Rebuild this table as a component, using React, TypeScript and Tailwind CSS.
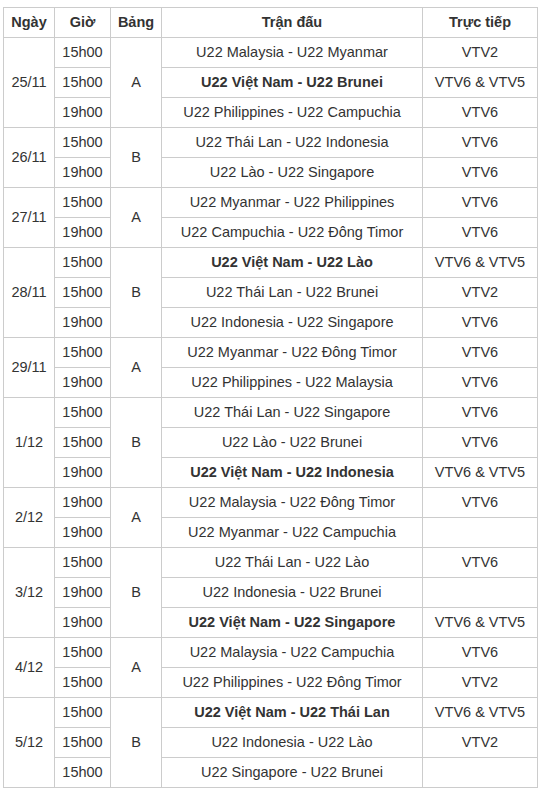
type Match = { time: string; text: string; bold?: boolean; tv: string };
type Day = { date: string; group: string; matches: Match[] };

const schedule: Day[] = [
  {
    date: "25/11",
    group: "A",
    matches: [
      { time: "15h00", text: "U22 Malaysia - U22 Myanmar", tv: "VTV2" },
      { time: "15h00", text: "U22 Việt Nam - U22 Brunei", bold: true, tv: "VTV6 & VTV5" },
      { time: "19h00", text: "U22 Philippines - U22 Campuchia", tv: "VTV6" },
    ],
  },
  {
    date: "26/11",
    group: "B",
    matches: [
      { time: "15h00", text: "U22 Thái Lan - U22 Indonesia", tv: "VTV6" },
      { time: "19h00", text: "U22 Lào - U22 Singapore", tv: "VTV6" },
    ],
  },
  {
    date: "27/11",
    group: "A",
    matches: [
      { time: "15h00", text: "U22 Myanmar - U22 Philippines", tv: "VTV6" },
      { time: "19h00", text: "U22 Campuchia - U22 Đông Timor", tv: "VTV6" },
    ],
  },
  {
    date: "28/11",
    group: "B",
    matches: [
      { time: "15h00", text: "U22 Việt Nam - U22 Lào", bold: true, tv: "VTV6 & VTV5" },
      { time: "15h00", text: "U22 Thái Lan - U22 Brunei", tv: "VTV2" },
      { time: "19h00", text: "U22 Indonesia - U22 Singapore", tv: "VTV6" },
    ],
  },
  {
    date: "29/11",
    group: "A",
    matches: [
      { time: "15h00", text: "U22 Myanmar - U22 Đông Timor", tv: "VTV6" },
      { time: "19h00", text: "U22 Philippines - U22 Malaysia", tv: "VTV6" },
    ],
  },
  {
    date: "1/12",
    group: "B",
    matches: [
      { time: "15h00", text: "U22 Thái Lan - U22 Singapore", tv: "VTV6" },
      { time: "15h00", text: "U22 Lào - U22 Brunei", tv: "VTV6" },
      { time: "19h00", text: "U22 Việt Nam - U22 Indonesia", bold: true, tv: "VTV6 & VTV5" },
    ],
  },
  {
    date: "2/12",
    group: "A",
    matches: [
      { time: "19h00", text: "U22 Malaysia - U22 Đông Timor", tv: "VTV6" },
      { time: "19h00", text: "U22 Myanmar - U22 Campuchia", tv: "" },
    ],
  },
  {
    date: "3/12",
    group: "B",
    matches: [
      { time: "15h00", text: "U22 Thái Lan - U22 Lào", tv: "VTV6" },
      { time: "19h00", text: "U22 Indonesia - U22 Brunei", tv: "" },
      { time: "19h00", text: "U22 Việt Nam - U22 Singapore", bold: true, tv: "VTV6 & VTV5" },
    ],
  },
  {
    date: "4/12",
    group: "A",
    matches: [
      { time: "15h00", text: "U22 Malaysia - U22 Campuchia", tv: "VTV6" },
      { time: "15h00", text: "U22 Philippines - U22 Đông Timor", tv: "VTV2" },
    ],
  },
  {
    date: "5/12",
    group: "B",
    matches: [
      { time: "15h00", text: "U22 Việt Nam - U22 Thái Lan", bold: true, tv: "VTV6 & VTV5" },
      { time: "15h00", text: "U22 Indonesia - U22 Lào", tv: "VTV2" },
      { time: "15h00", text: "U22 Singapore - U22 Brunei", tv: "" },
    ],
  },
];

const cell = "border border-[#cccccc] h-[30px] p-0 text-center align-middle";

export default function App() {
  return (
    <div className="min-h-screen bg-white pt-[7px] pl-[3px] font-['Liberation_Sans',Arial,sans-serif] text-[14.5px] text-[#333333]">
      <table className="w-[534px] table-fixed border-collapse">
        <colgroup>
          <col className="w-[51px]" />
          <col className="w-[56px]" />
          <col className="w-[51px]" />
          <col className="w-[261px]" />
          <col className="w-[115px]" />
        </colgroup>
        <thead>
          <tr>
            <th className={`${cell} font-bold`}>Ngày</th>
            <th className={`${cell} font-bold`}>Giờ</th>
            <th className={`${cell} font-bold`}>Bảng</th>
            <th className={`${cell} font-bold`}>Trận đấu</th>
            <th className={`${cell} font-bold`}>Trực tiếp</th>
          </tr>
        </thead>
        <tbody>
          {schedule.map((day) =>
            day.matches.map((m, i) => (
              <tr key={day.date + i}>
                {i === 0 && (
                  <td rowSpan={day.matches.length} className={cell}>
                    {day.date}
                  </td>
                )}
                <td className={cell}>{m.time}</td>
                {i === 0 && (
                  <td rowSpan={day.matches.length} className={cell}>
                    {day.group}
                  </td>
                )}
                <td className={`${cell} ${m.bold ? "font-bold" : ""}`}>{m.text}</td>
                <td className={cell}>{m.tv}</td>
              </tr>
            ))
          )}
        </tbody>
      </table>
    </div>
  );
}
